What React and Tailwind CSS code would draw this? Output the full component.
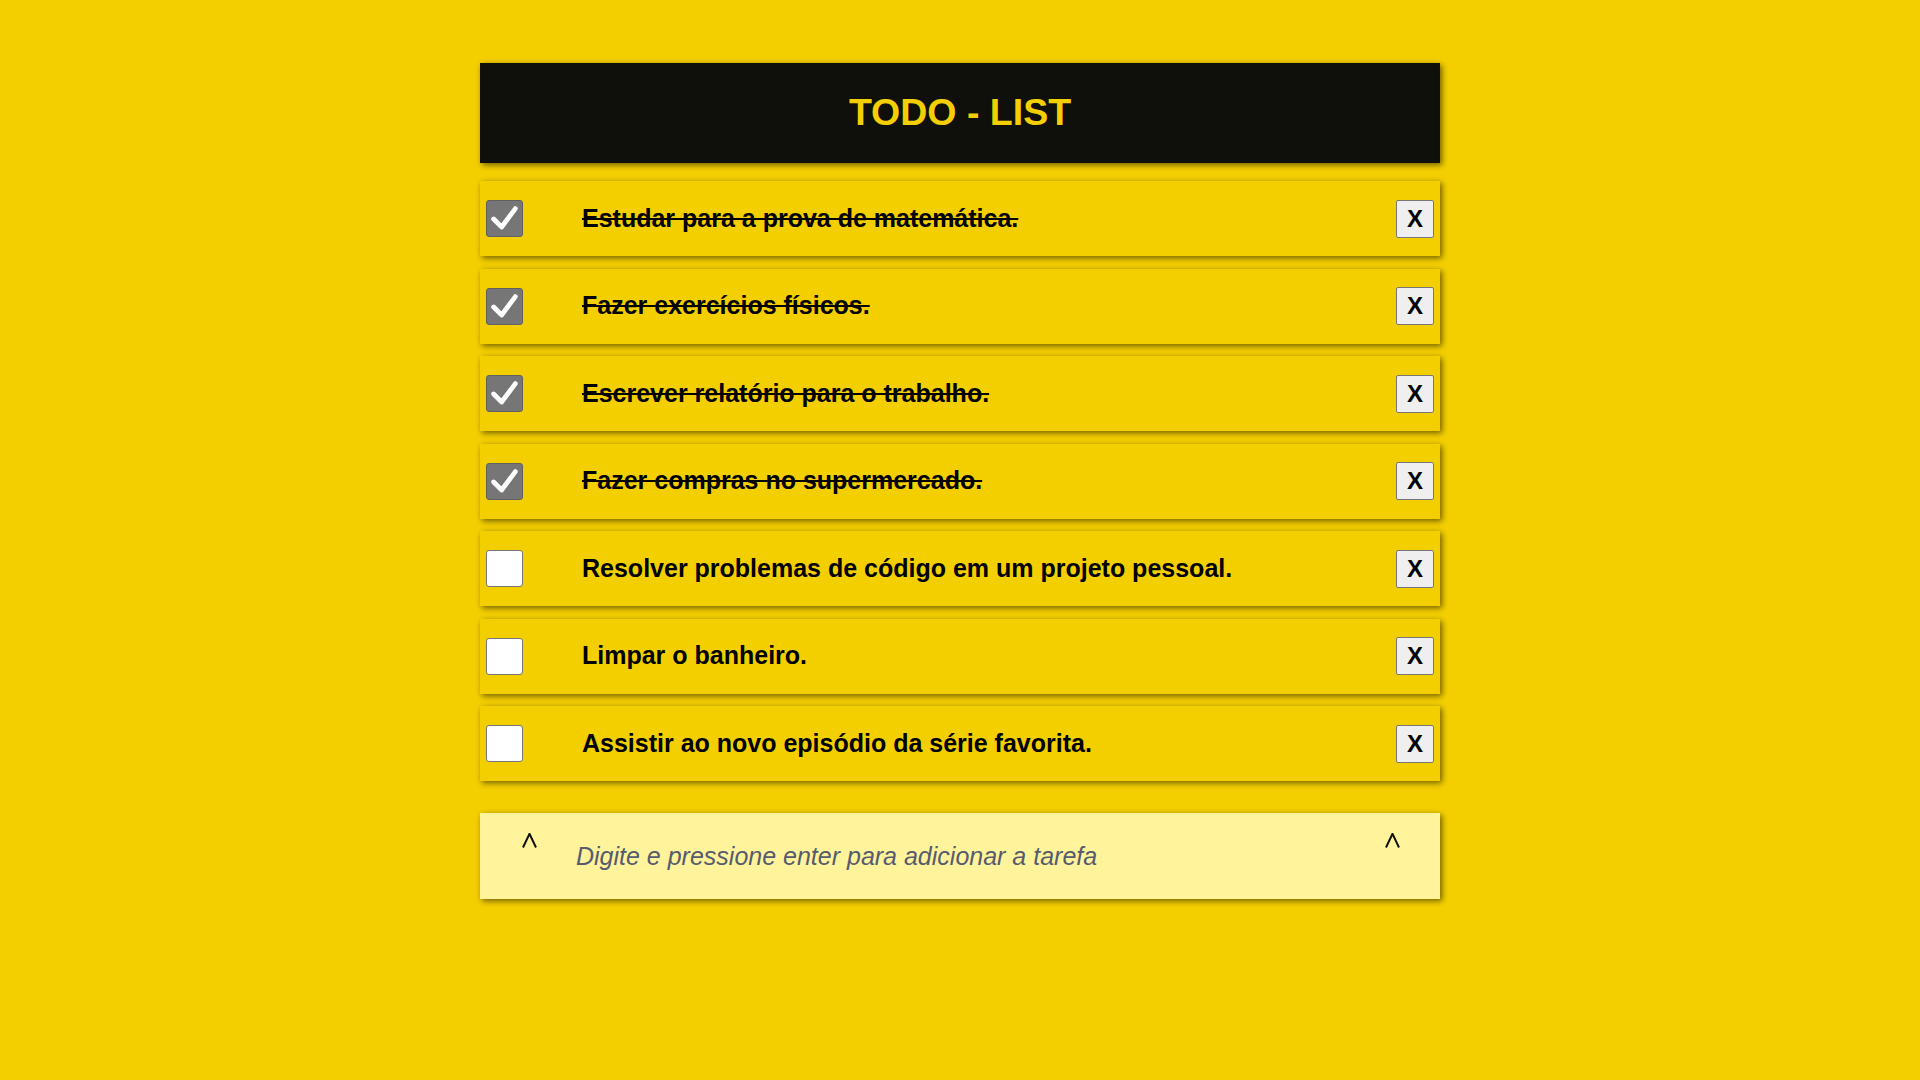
import React from "react";
import { useState } from "react";

const initialTasks = [
  { text: "Estudar para a prova de matemática.", done: true },
  { text: "Fazer exercícios físicos.", done: true },
  { text: "Escrever relatório para o trabalho.", done: true },
  { text: "Fazer compras no supermercado.", done: true },
  { text: "Resolver problemas de código em um projeto pessoal.", done: false },
  { text: "Limpar o banheiro.", done: false },
  { text: "Assistir ao novo episódio da série favorita.", done: false },
];

const CheckBox = ({ checked, onToggle }) => (
  <button
    type="button"
    onClick={onToggle}
    className={
      checked
        ? "w-[37px] h-[37px] shrink-0 rounded-[3px] border border-[#5f5f5f] bg-[#767676] flex items-center justify-center"
        : "w-[37px] h-[37px] shrink-0 rounded-[3px] border border-[#767676] bg-white"
    }
  >
    {checked && (
      <svg width="37" height="37" viewBox="0 0 37 37">
        <polyline
          points="7,19 15.5,27.5 30,8"
          fill="none"
          stroke="#ffffff"
          strokeWidth="5"
          strokeLinecap="round"
          strokeLinejoin="round"
        />
      </svg>
    )}
  </button>
);

const Caret = ({ className }) => (
  <svg className={className} width="15" height="15" viewBox="0 0 15 15">
    <polyline points="1,14.5 7.5,0.8 14,14.5" fill="none" stroke="#111111" strokeWidth="2" />
  </svg>
);

const App = () => {
  const [tasks, setTasks] = useState(initialTasks);
  const [value, setValue] = useState("");

  const toggle = (i) => {
    setTasks(tasks.map((t, idx) => (idx === i ? { ...t, done: !t.done } : t)));
  };

  const remove = (i) => {
    setTasks(tasks.filter((_, idx) => idx !== i));
  };

  const handleKey = (e) => {
    if (e.key === "Enter" && value.trim()) {
      setTasks([...tasks, { text: value.trim(), done: false }]);
      setValue("");
    }
  };

  return (
    <div className="min-h-screen bg-[#f4cf00] font-['Liberation_Sans',Arial,sans-serif]">
      <div className="w-[960px] mx-auto pt-[63px]">
        <div className="h-[100px] bg-[#0f0f0b] flex items-center justify-center shadow-[2px_2px_6px_rgba(0,0,0,0.55)]">
          <h1 className="text-[37.5px] font-bold text-[#f4cf00] -mt-[2px]">TODO - LIST</h1>
        </div>

        <ul className="mt-[18px] flex flex-col gap-[12.5px]">
          {tasks.map((task, i) => (
            <li
              key={i}
              className="h-[75px] flex items-center px-[6px] bg-[#f4cf00] shadow-[2px_2px_6px_rgba(0,0,0,0.55)]"
            >
              <CheckBox checked={task.done} onToggle={() => toggle(i)} />
              <span
                className={
                  task.done
                    ? "ml-[59px] flex-1 text-[25px] font-bold text-black line-through"
                    : "ml-[59px] flex-1 text-[25px] font-bold text-black"
                }
              >
                {task.text}
              </span>
              <button
                type="button"
                onClick={() => remove(i)}
                className="w-[38px] h-[38px] shrink-0 bg-[#efefef] border border-[#767676] rounded-[2px] text-[24px] font-bold text-black flex items-center justify-center"
              >
                X
              </button>
            </li>
          ))}
        </ul>

        <div className="relative mt-[32px] h-[86px] bg-[#fff49b] shadow-[2px_2px_6px_rgba(0,0,0,0.55)]">
          <Caret className="absolute left-[42px] top-[20px]" />
          <Caret className="absolute right-[40px] top-[20px]" />
          <input
            type="text"
            value={value}
            onChange={(e) => setValue(e.target.value)}
            onKeyDown={handleKey}
            placeholder="Digite e pressione enter para adicionar a tarefa"
            className="w-full h-full bg-transparent pl-[96px] pr-[80px] text-[25px] italic text-[#333] placeholder:text-[#575b6e] outline-none"
          />
        </div>
      </div>
    </div>
  );
};

export default App;
